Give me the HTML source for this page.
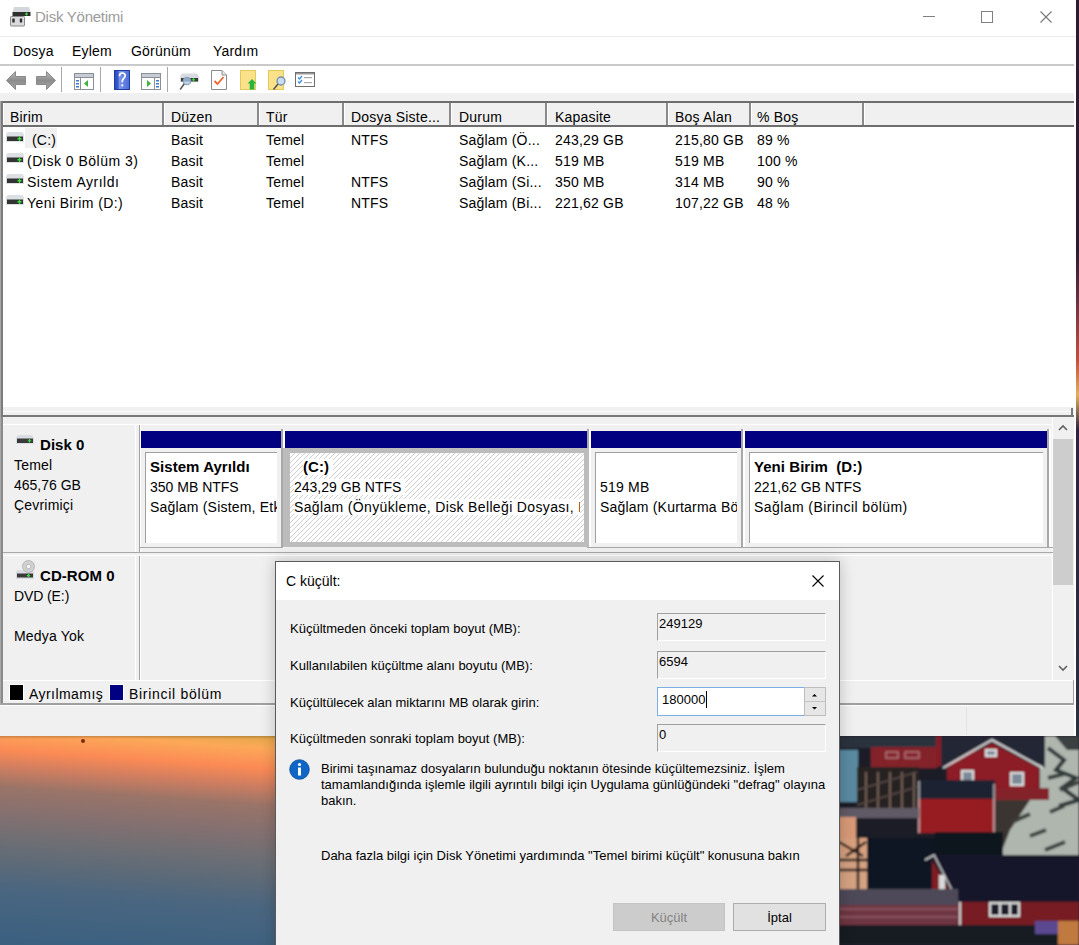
<!DOCTYPE html>
<html><head><meta charset="utf-8">
<style>
*{margin:0;padding:0;box-sizing:border-box}
html,body{width:1079px;height:945px;overflow:hidden;background:#2b1b2e;font-family:"Liberation Sans",sans-serif;}
.a{position:absolute}
.t{position:absolute;white-space:nowrap;font-size:14px;color:#000;line-height:16px;letter-spacing:0.2px}
.b{font-weight:bold;font-size:15px;letter-spacing:0.05px}
#win{position:absolute;left:0;top:0;width:1076px;height:736px;background:#f0f0f0;overflow:hidden}
.hd{position:absolute;top:103px;height:23px;background:#f0f0f0;border-left:1px solid #fff;border-right:2px solid #8a8a8a}
.row .t{}
.ico{position:absolute}
.d{position:absolute;white-space:nowrap;font-size:13px;line-height:15px;color:#000}
.tb{position:absolute;background:#f0f0f0;border-top:1px solid #a0a0a0;border-left:1px solid #a0a0a0;border-right:1px solid #fff;border-bottom:1px solid #fff}
</style></head><body>
<!-- wallpaper left gradient -->
<div class="a" style="left:0;top:736px;width:276px;height:209px;background:linear-gradient(184deg,#e0a848 0px,#fca858 13px,#fb8a55 33px,#d07e60 50px,#9a7468 70px,#857070 96px,#6f6f74 121px,#5c6a78 147px,#4a6680 172px,#3a6080 228px)"></div>
<div class="a" style="left:0;top:736px;width:276px;height:3px;background:linear-gradient(180deg,rgba(60,30,10,0.25),rgba(60,30,10,0))"></div>
<div class="a" style="left:81px;top:739px;width:4px;height:4px;border-radius:50%;background:#7a2a10"></div>
<!-- wallpaper right photo -->
<svg class="a" style="left:839px;top:736px" width="240" height="209" viewBox="839 736 240 209"><defs><filter id="bl" x="0" y="0" width="1" height="1"><feGaussianBlur stdDeviation="0.9"/></filter></defs><g filter="url(#bl)">
  <rect x="839" y="736" width="240" height="209" fill="#1a1c26"/>
  <!-- snow right -->
  <path d="M1040 736H1079V856H994V800H1040Z" fill="#aeb6ae"/>
  <path d="M1055 736h24v14h-12z" fill="#3a4040"/>
  <path d="M1048 748l16 12-8 10 20 8-14 10 17 12-20 6" stroke="#2f3738" stroke-width="4" fill="none"/>
  <path d="M995 800H1030L1010 830L1000 856H995Z" fill="#3a3632"/><path d="M1012 822l18-8M1030 836l16-6M1045 850l20-8M1050 812l14-6M1060 790l19-8M1048 778l16-4" stroke="#3a403e" stroke-width="4" fill="none"/>
  <!-- left teal -->
  <rect x="839" y="750" width="19" height="52" fill="#5a8aa2"/>
  <!-- upper dark roof left -->
  <rect x="839" y="736" width="100" height="12" fill="#2a303e"/>
  <!-- upper red house left -->
  <rect x="871" y="747" width="66" height="21" fill="#84202a"/>
  <rect x="886" y="752" width="12" height="6" fill="none" stroke="#c0a0a0" stroke-width="1"/>
  <rect x="905" y="752" width="14" height="6" fill="none" stroke="#c0a0a0" stroke-width="1"/>
  <rect x="936" y="736" width="40" height="30" fill="#861c26"/>
  <!-- gable house -->
  <path d="M941 768L992 739L1045 768V736H941Z" fill="#202536"/>
  <path d="M943 768L992 740L1043 768" stroke="#dcdcdc" stroke-width="2" fill="none"/>
  <path d="M947 768L992 743L1039 768V790H947Z" fill="#8c1c26"/>
    <rect x="985" y="749" width="12" height="8" fill="#e0e0e0"/><rect x="987" y="751" width="8" height="4" fill="#7d8a99"/>
  <rect x="961" y="770" width="13" height="13" fill="#e0e0e0"/><rect x="963" y="772" width="9" height="9" fill="#7d8a99"/>
  <rect x="1010" y="772" width="14" height="14" fill="#e0e0e0"/><rect x="1012" y="774" width="10" height="10" fill="#7d8a99"/>
  <rect x="994" y="788" width="55" height="12" fill="#84202a"/>
  <!-- wooden structure -->
  <rect x="857" y="767" width="62" height="45" fill="#262022"/>
  <path d="M866 772v36M878 772v36M890 772v36M902 772v36M914 772v36" stroke="#b89a88" stroke-width="1"/>
  <path d="M857 790l60-18M857 805l60-18" stroke="#5a4a48" stroke-width="1.5"/>
  <!-- red box building -->
  <rect x="918" y="780" width="77" height="20" fill="#1b2030"/>
  <rect x="918" y="799" width="77" height="34" fill="#961a24"/>
  <path d="M919 781v52M994 784v48" stroke="#d0d0d0" stroke-width="1.3"/>
  <!-- lower-left planks -->
  <rect x="839" y="808" width="80" height="10" fill="#605a66"/>
  <rect x="839" y="817" width="17" height="22" fill="#d89a78"/>
  <rect x="839" y="838" width="55" height="14" fill="#d8a07e"/>
  <rect x="839" y="852" width="30" height="42" fill="#d5a282"/>
  <path d="M839 842l24 14M846 856l20-14M839 860h55M839 870h55M858 838v56" stroke="#1a1818" stroke-width="2.5"/>
  <!-- dark trees -->
  <rect x="867" y="838" width="68" height="52" fill="#111822"/>
  <rect x="935" y="832" width="68" height="24" fill="#0e131b"/>
  <!-- big roof -->
  <path d="M934 855H1079V902H958Z" fill="#14172a"/>
  <path d="M925 860L934 855L958 902" stroke="#d0d0d0" stroke-width="1.5" fill="none"/>
  <path d="M932 860L956 902H932Z" fill="#801a24"/>
  <rect x="939" y="875" width="6" height="18" fill="#d8d8d8"/>
  <!-- red wall bottom -->
  <rect x="957" y="902" width="122" height="25" fill="#761a22"/>
  <rect x="959" y="902" width="2" height="24" fill="#d0d0d0"/>
  <rect x="989" y="902" width="31" height="15" fill="#dedede"/>
  <rect x="991" y="904" width="8" height="11" fill="#1a1a2a"/><rect x="1001" y="904" width="8" height="11" fill="#1a1a2a"/><rect x="1011" y="904" width="7" height="11" fill="#1a1a2a"/>
  <!-- deck and railing -->
  <rect x="839" y="889" width="119" height="16" fill="#4e4a58"/>
  <rect x="839" y="905" width="119" height="20" fill="#6e3442"/>
  <path d="M839 909h119M839 917h119" stroke="#a07080" stroke-width="1"/>
  <rect x="839" y="925" width="240" height="20" fill="#191a22"/>
  <rect x="1035" y="921" width="26" height="13" fill="#5a4890"/>
  <rect x="1058" y="921" width="21" height="24" fill="#c07a40"/>
</g></svg>
<div class="a" style="left:1076px;top:0;width:3px;height:736px;background:linear-gradient(180deg,#2e1a30 0,#2e1a30 250px,#6a3040 300px,#c05040 360px,#e0b060 395px,#302040 430px,#283040 736px)"></div>
<div id="win">
  <!-- title bar -->
  <div class="a" style="left:0;top:0;width:1076px;height:36px;background:#fff"></div>
  <svg class="ico" style="left:9px;top:6px" width="24" height="22" viewBox="0 0 24 22">
    <path d="M5 1H20L21.5 6H3.5Z" fill="#d3d6da"/>
    <rect x="3.5" y="6" width="18" height="4" fill="#2e2e2e"/>
    <path d="M17.5 6.5V9.5M16 8H19" stroke="#3ce03c" stroke-width="1.2"/>
    <rect x="1.5" y="10.5" width="14" height="9.5" rx="0.8" fill="#dadadc" stroke="#8a8a8a" stroke-width="1"/>
    <rect x="3.3" y="12.5" width="2.4" height="4" rx="0.6" fill="#2e2e2e"/>
    <rect x="10.8" y="12.5" width="2.4" height="4" rx="0.6" fill="#2e2e2e"/>
  </svg>
  <div class="t" style="left:35px;top:8px;color:#9a9a9a;font-size:15px;line-height:17px;letter-spacing:-0.25px">Disk Yönetimi</div>
  <div class="a" style="left:923px;top:16px;width:12px;height:1px;background:#808080"></div>
  <div class="a" style="left:981px;top:11px;width:12px;height:12px;border:1px solid #808080"></div>
  <svg class="ico" style="left:1040px;top:11px" width="12" height="12" viewBox="0 0 12 12"><path d="M0.5 0.5L11.5 11.5M11.5 0.5L0.5 11.5" stroke="#777" stroke-width="1.1"/></svg>
  <div class="a" style="left:0;top:36px;width:1076px;height:1px;background:#ececec"></div>
  <!-- menu -->
  <div class="a" style="left:0;top:37px;width:1076px;height:27px;background:#fff"></div>
  <div class="t" style="left:13px;top:43px">Dosya</div>
  <div class="t" style="left:72px;top:43px">Eylem</div>
  <div class="t" style="left:131px;top:43px">Görünüm</div>
  <div class="t" style="left:213px;top:43px">Yardım</div>
  <div class="a" style="left:0;top:64px;width:1076px;height:2px;background:#cacaca"></div>
  <!-- toolbar -->
  <div class="a" style="left:0;top:66px;width:1076px;height:27px;background:#fff"></div>
  
  <!-- back arrow -->
  <svg class="ico" style="left:5px;top:70px" width="23" height="21" viewBox="0 0 23 21">
    <defs><linearGradient id="ga" x1="0" y1="0" x2="0" y2="1"><stop offset="0" stop-color="#bdbdbd"/><stop offset="0.5" stop-color="#8c8c8c"/><stop offset="1" stop-color="#a8a8a8"/></linearGradient></defs>
    <path d="M1.5 10.5L10.5 1.5V6.5H20.5V14.5H10.5V19.5Z" fill="url(#ga)" stroke="#8a8a8a" stroke-width="1" stroke-linejoin="round"/>
  </svg>
  <svg class="ico" style="left:34px;top:70px" width="23" height="21" viewBox="0 0 23 21">
    <path d="M21.5 10.5L12.5 1.5V6.5H2.5V14.5H12.5V19.5Z" fill="url(#ga)" stroke="#8a8a8a" stroke-width="1" stroke-linejoin="round"/>
  </svg>
  <div class="a" style="left:61px;top:67px;width:1px;height:25px;background:#a8a8a8"></div>
  <!-- icon 3: window with left arrow -->
  <svg class="ico" style="left:74px;top:73px" width="20" height="17" viewBox="0 0 20 17">
    <rect x="0.5" y="0.5" width="19" height="16" fill="#fff" stroke="#8a9099"/>
    <rect x="1" y="1" width="18" height="3" fill="#c7ccd4"/>
    <rect x="1" y="4" width="18" height="1" fill="#8a9099"/>
    <rect x="6" y="5" width="1" height="11" fill="#8a9099"/>
    <rect x="2" y="7" width="3" height="1.5" fill="#3c78c8"/><rect x="2" y="10" width="3" height="1.5" fill="#3c78c8"/><rect x="2" y="13" width="3" height="1.5" fill="#3c78c8"/>
    <path d="M10 10.5L14 7V14Z" fill="#3cb43c"/>
  </svg>
  <div class="a" style="left:100px;top:67px;width:1px;height:25px;background:#a8a8a8"></div>
  <!-- help -->
  <svg class="ico" style="left:114px;top:70px" width="16" height="20" viewBox="0 0 16 20">
    <defs><linearGradient id="gh" x1="0" y1="0" x2="1" y2="0"><stop offset="0" stop-color="#2a4cc0"/><stop offset="0.25" stop-color="#3b5bd0"/><stop offset="0.3" stop-color="#7d98e8"/><stop offset="1" stop-color="#4a6ad8"/></linearGradient></defs>
    <rect x="0.5" y="0.5" width="15" height="19" fill="url(#gh)" stroke="#1e3aa0" stroke-width="1"/>
    <path d="M5.5 6.2C5.5 4 6.8 3 8.3 3C10 3 11.2 4.1 11.2 5.8C11.2 7.6 9.3 8.4 8.6 9.8C8.3 10.5 8.3 11.2 8.3 12.3" stroke="#fff" stroke-width="1.7" fill="none"/>
    <circle cx="8.3" cy="15.3" r="1.1" fill="#fff"/>
  </svg>
  <!-- icon 5: window with right arrow -->
  <svg class="ico" style="left:141px;top:73px" width="20" height="17" viewBox="0 0 20 17">
    <rect x="0.5" y="0.5" width="19" height="16" fill="#fff" stroke="#8a9099"/>
    <rect x="1" y="1" width="18" height="3" fill="#c7ccd4"/>
    <rect x="1" y="4" width="18" height="1" fill="#8a9099"/>
    <rect x="13" y="5" width="1" height="11" fill="#8a9099"/>
    <rect x="15" y="7" width="3" height="1.5" fill="#3c78c8"/><rect x="15" y="10" width="3" height="1.5" fill="#3c78c8"/><rect x="15" y="13" width="3" height="1.5" fill="#3c78c8"/>
    <path d="M10 10.5L6 7V14Z" fill="#3cb43c"/>
  </svg>
  <div class="a" style="left:167px;top:67px;width:1px;height:25px;background:#a8a8a8"></div>
  <!-- icon 6: disk with magnifier -->
  <svg class="ico" style="left:179px;top:73px" width="21" height="18" viewBox="0 0 21 18">
    <path d="M3 0.5H18L20 3.5V9H1V3.5Z" fill="#d8dbe0"/>
    <rect x="2" y="5" width="17" height="3.5" fill="#3a3a3a"/>
    <path d="M14.5 5V8.5M12.8 6.75H16.2" stroke="#3ce03c" stroke-width="1.2"/>
    <circle cx="8" cy="8" r="3.8" fill="#a9c8e8" fill-opacity="0.8" stroke="#8aa0b5" stroke-width="1.1"/>
    <path d="M5.2 10.8L1.2 16.5" stroke="#555" stroke-width="1.5"/>
  </svg>
  <!-- icon 7: doc with check -->
  <svg class="ico" style="left:211px;top:70px" width="16" height="20" viewBox="0 0 16 20">
    <path d="M0.5 0.5H11L15.5 5V19.5H0.5Z" fill="#fff" stroke="#8c8c8c"/>
    <path d="M11 0.5V5H15.5" fill="#e8e8e8" stroke="#8c8c8c"/>
    <path d="M3.5 11L6.5 14L12.5 7" stroke="#f0642d" stroke-width="1.8" fill="none"/>
  </svg>
  <!-- icon 8: folder up -->
  <svg class="ico" style="left:240px;top:70px" width="17" height="20" viewBox="0 0 17 20">
    <rect x="0.5" y="0.5" width="15" height="19" fill="#fbe28a" stroke="#e5c85a"/>
    <path d="M12 9L16.5 13.5H14.3V19.5H9.7V13.5H7.5Z" fill="#27b53c"/>
  </svg>
  <!-- icon 9: folder magnifier -->
  <svg class="ico" style="left:268px;top:70px" width="19" height="20" viewBox="0 0 19 20">
    <rect x="0.5" y="0.5" width="15" height="19" fill="#fbe28a" stroke="#e5c85a"/>
    <circle cx="13" cy="11" r="4" fill="#c8dcef" stroke="#7a8fa5" stroke-width="1.3"/>
    <path d="M10 14L5.5 19.5" stroke="#555" stroke-width="1.6"/>
  </svg>
  <!-- icon 10: checklist -->
  <svg class="ico" style="left:295px;top:72px" width="20" height="15" viewBox="0 0 20 15">
    <rect x="0.5" y="0.5" width="19" height="14" fill="#fff" stroke="#6e6e6e"/>
    <rect x="1" y="1" width="18" height="1.5" fill="#999"/>
    <path d="M3 5.5L4.5 7L7 4M3 9.5L4.5 11L7 8" stroke="#3c8ce0" stroke-width="1.3" fill="none"/>
    <rect x="9" y="5" width="8" height="1.2" fill="#aaa"/><rect x="9" y="10" width="8" height="1.2" fill="#aaa"/>
  </svg>

  <!-- list pane -->
  <div class="a" style="left:1px;top:101px;width:1074px;height:2px;background:#6e6e6e"></div>
  <div class="a" style="left:0;top:101px;width:1px;height:604px;background:#a8a8a8"></div><div class="a" style="left:1px;top:101px;width:2px;height:316px;background:#7c7c7c"></div>
  <div class="a" style="left:3px;top:103px;width:1071px;height:304px;background:#fff"></div>
  <!-- header -->
  <div class="hd" style="left:3px;width:161px"></div>
  <div class="hd" style="left:164px;width:95px"></div>
  <div class="hd" style="left:259px;width:85px"></div>
  <div class="hd" style="left:344px;width:107px"></div>
  <div class="hd" style="left:451px;width:96px"></div>
  <div class="hd" style="left:547px;width:121px"></div>
  <div class="hd" style="left:668px;width:83px"></div>
  <div class="hd" style="left:751px;width:113px"></div>
  <div class="hd" style="left:864px;width:210px;border-right:0"></div>
  <div class="a" style="left:3px;top:125px;width:1071px;height:2px;background:#6e6e6e"></div>
  <div class="t" style="left:10px;top:109px">Birim</div>
  <div class="t" style="left:171px;top:109px">Düzen</div>
  <div class="t" style="left:266px;top:109px">Tür</div>
  <div class="t" style="left:351px;top:109px">Dosya Siste...</div>
  <div class="t" style="left:459px;top:109px">Durum</div>
  <div class="t" style="left:555px;top:109px">Kapasite</div>
  <div class="t" style="left:675px;top:109px">Boş Alan</div>
  <div class="t" style="left:757px;top:109px">% Boş</div>
  <div class="a" style="left:25px;top:128px;width:32px;height:20px;background:#f0f0f0"></div>
<svg class="ico" style="left:6px;top:132px" width="18" height="10" viewBox="0 0 18 10">
    <path d="M1.5 0H16.5L18 2.5V10H0V2.5Z" fill="#dcdfe3"/>
    <rect x="1" y="4.5" width="16" height="4.5" fill="#333"/>
    <path d="M13.5 4.5V9M11.5 6.75H15.5" stroke="#3ce03c" stroke-width="1.3"/></svg>
<div class="t" style="left:32px;top:132px">(C:)</div>
<div class="t" style="left:171px;top:132px">Basit</div>
<div class="t" style="left:266px;top:132px">Temel</div>
<div class="t" style="left:351px;top:132px">NTFS</div>
<div class="t" style="left:459px;top:132px">Sağlam (Ö...</div>
<div class="t" style="left:555px;top:132px">243,29 GB</div>
<div class="t" style="left:675px;top:132px">215,80 GB</div>
<div class="t" style="left:757px;top:132px">89 %</div>
<svg class="ico" style="left:6px;top:153px" width="18" height="10" viewBox="0 0 18 10">
    <path d="M1.5 0H16.5L18 2.5V10H0V2.5Z" fill="#dcdfe3"/>
    <rect x="1" y="4.5" width="16" height="4.5" fill="#333"/>
    <path d="M13.5 4.5V9M11.5 6.75H15.5" stroke="#3ce03c" stroke-width="1.3"/></svg>
<div class="t" style="left:27px;top:153px;letter-spacing:0.5px">(Disk 0 Bölüm 3)</div>
<div class="t" style="left:171px;top:153px">Basit</div>
<div class="t" style="left:266px;top:153px">Temel</div>
<div class="t" style="left:459px;top:153px">Sağlam (K...</div>
<div class="t" style="left:555px;top:153px">519 MB</div>
<div class="t" style="left:675px;top:153px">519 MB</div>
<div class="t" style="left:757px;top:153px">100 %</div>
<svg class="ico" style="left:6px;top:174px" width="18" height="10" viewBox="0 0 18 10">
    <path d="M1.5 0H16.5L18 2.5V10H0V2.5Z" fill="#dcdfe3"/>
    <rect x="1" y="4.5" width="16" height="4.5" fill="#333"/>
    <path d="M13.5 4.5V9M11.5 6.75H15.5" stroke="#3ce03c" stroke-width="1.3"/></svg>
<div class="t" style="left:27px;top:174px;letter-spacing:0.5px">Sistem Ayrıldı</div>
<div class="t" style="left:171px;top:174px">Basit</div>
<div class="t" style="left:266px;top:174px">Temel</div>
<div class="t" style="left:351px;top:174px">NTFS</div>
<div class="t" style="left:459px;top:174px">Sağlam (Si...</div>
<div class="t" style="left:555px;top:174px">350 MB</div>
<div class="t" style="left:675px;top:174px">314 MB</div>
<div class="t" style="left:757px;top:174px">90 %</div>
<svg class="ico" style="left:6px;top:195px" width="18" height="10" viewBox="0 0 18 10">
    <path d="M1.5 0H16.5L18 2.5V10H0V2.5Z" fill="#dcdfe3"/>
    <rect x="1" y="4.5" width="16" height="4.5" fill="#333"/>
    <path d="M13.5 4.5V9M11.5 6.75H15.5" stroke="#3ce03c" stroke-width="1.3"/></svg>
<div class="t" style="left:27px;top:195px;letter-spacing:0.43px">Yeni Birim (D:)</div>
<div class="t" style="left:171px;top:195px">Basit</div>
<div class="t" style="left:266px;top:195px">Temel</div>
<div class="t" style="left:351px;top:195px">NTFS</div>
<div class="t" style="left:459px;top:195px">Sağlam (Bi...</div>
<div class="t" style="left:555px;top:195px">221,62 GB</div>
<div class="t" style="left:675px;top:195px">107,22 GB</div>
<div class="t" style="left:757px;top:195px">48 %</div>


  <!-- splitter area -->
  <div class="a" style="left:3px;top:407px;width:1071px;height:9px;background:#f0f0f0"></div>
  <div class="a" style="left:3px;top:411px;width:1071px;height:1px;background:#fafafa"></div>
  <div class="a" style="left:1px;top:415px;width:1073px;height:2px;background:#787878"></div>
  <!-- graphic pane -->
  <div class="a" style="left:1px;top:417px;width:2px;height:287px;background:#8a8a8a"></div>
  <div class="a" style="left:3px;top:424px;width:1050px;height:1px;background:#fff"></div><div class="a" style="left:1052px;top:417px;width:1px;height:263px;background:#fff"></div><div class="a" style="left:1071px;top:408px;width:2px;height:8px;background:#7a7a7a"></div>
  <!-- disk0 info cell -->
  <div class="a" style="left:135px;top:425px;width:1px;height:128px;background:#fff"></div>
  <div class="a" style="left:139px;top:425px;width:1px;height:128px;background:#a0a0a0"></div>
  <div class="a" style="left:140px;top:425px;width:1px;height:128px;background:#fff"></div>
  <svg class="ico" style="left:16px;top:435px" width="18" height="10" viewBox="0 0 18 10">
    <path d="M2 0H16L18 3V9H0V3Z" fill="#d9dce1"/>
    <rect x="1" y="3.5" width="16" height="4.5" fill="#3a3a3a"/>
    <path d="M13.5 4V7.5M11.8 5.75H15.2" stroke="#3ce03c" stroke-width="1.2"/></svg>
  <div class="t b" style="left:40px;top:437px">Disk 0</div>
  <div class="t" style="left:14px;top:457px">Temel</div>
  <div class="t" style="left:14px;top:477px;letter-spacing:0px">465,76 GB</div>
  <div class="t" style="left:14px;top:497px">Çevrimiçi</div>
  <!-- partitions -->
  <div class="a" style="left:141px;top:431px;width:140px;height:17px;background:#000080"></div>
<div class="a" style="left:281px;top:429px;width:2px;height:119px;background:#a8a8a8"></div>
<div class="a" style="left:283px;top:429px;width:2px;height:119px;background:#fff"></div>
<div class="a" style="left:145px;top:452px;width:132px;height:91px;background:#fff;border-left:1px solid #a0a0a0;border-top:1px solid #a0a0a0"></div>
<div class="a" style="left:150px;top:456px;width:127px;height:60px;overflow:hidden"><div class="t b" style="left:0;top:3px">Sistem Ayrıldı</div><div class="t" style="left:0;top:23px;letter-spacing:0px">350 MB NTFS</div><div class="t" style="left:0;top:43px">Sağlam (Sistem, Etkin, Birincil bölüm)</div></div>
<div class="a" style="left:285px;top:431px;width:302px;height:17px;background:#000080"></div>
<div class="a" style="left:587px;top:429px;width:2px;height:119px;background:#a8a8a8"></div>
<div class="a" style="left:589px;top:429px;width:2px;height:119px;background:#fff"></div>
<div class="a" style="left:283px;top:448px;width:306px;height:99px;background:#bcbcbc"></div>
<svg class="a" style="left:290px;top:453px" width="294" height="89"><defs><pattern id="hp" width="5" height="5" patternUnits="userSpaceOnUse"><rect width="5" height="5" fill="#fff"/><path d="M-1 6L6 -1" stroke="#cfcfcf" stroke-width="1"/></pattern></defs><rect width="294" height="89" fill="url(#hp)"/></svg>
<div class="a" style="left:291px;top:456px;width:289px;height:60px;overflow:hidden"><div class="t b" style="left:12px;top:3px;background:#fff;padding:0 4px 0 0">(C:)</div><div class="t" style="left:3px;top:23px;background:#fff;padding-right:4px;letter-spacing:0px">243,29 GB NTFS</div><div class="t" style="left:3px;top:43px;background:#fff;letter-spacing:0.35px">Sağlam (Önyükleme, Disk Belleği Dosyası, Kilitlenme Dökümü, Birincil bölüm)</div></div>
<div class="a" style="left:591px;top:431px;width:150px;height:17px;background:#000080"></div>
<div class="a" style="left:741px;top:429px;width:2px;height:119px;background:#a8a8a8"></div>
<div class="a" style="left:743px;top:429px;width:2px;height:119px;background:#fff"></div>
<div class="a" style="left:595px;top:452px;width:142px;height:91px;background:#fff;border-left:1px solid #a0a0a0;border-top:1px solid #a0a0a0"></div>
<div class="a" style="left:600px;top:456px;width:137px;height:60px;overflow:hidden"><div class="t" style="left:0;top:23px">519 MB</div><div class="t" style="left:0;top:43px">Sağlam (Kurtarma Bölümü)</div></div>
<div class="a" style="left:745px;top:431px;width:302px;height:17px;background:#000080"></div>
<div class="a" style="left:1047px;top:429px;width:2px;height:119px;background:#a8a8a8"></div>
<div class="a" style="left:1049px;top:429px;width:2px;height:119px;background:#fff"></div>
<div class="a" style="left:749px;top:452px;width:294px;height:91px;background:#fff;border-left:1px solid #a0a0a0;border-top:1px solid #a0a0a0"></div>
<div class="a" style="left:754px;top:456px;width:289px;height:60px;overflow:hidden"><div class="t b" style="left:0;top:3px">Yeni Birim&nbsp; (D:)</div><div class="t" style="left:0;top:23px;letter-spacing:0px">221,62 GB NTFS</div><div class="t" style="left:0;top:43px;letter-spacing:0.42px">Sağlam (Birincil bölüm)</div></div>

  <div class="a" style="left:140px;top:547px;width:143px;height:1px;background:#a8a8a8"></div><div class="a" style="left:589px;top:547px;width:464px;height:1px;background:#a8a8a8"></div>
  <div class="a" style="left:3px;top:552px;width:1050px;height:1px;background:#a8a8a8"></div>
  <div class="a" style="left:3px;top:555px;width:1050px;height:1px;background:#fff"></div>
  <!-- cdrom -->
  <div class="a" style="left:135px;top:556px;width:1px;height:124px;background:#fff"></div>
  <div class="a" style="left:139px;top:556px;width:1px;height:124px;background:#a0a0a0"></div>
  <div class="a" style="left:140px;top:556px;width:1px;height:124px;background:#fff"></div>
  <svg class="ico" style="left:16px;top:560px" width="20" height="20" viewBox="0 0 20 20">
    <path d="M1 10H17L18 12V19H0V12Z" fill="#d9dce1"/>
    <circle cx="12.5" cy="6.5" r="6" fill="#d0d0d0" stroke="#b8b8b8"/>
    <circle cx="12.5" cy="6.5" r="2.2" fill="#fff" stroke="#aaa" stroke-width="0.8"/>
    <rect x="1" y="13.5" width="16" height="4" fill="#3a3a3a"/>
    <path d="M12.5 14V17.3M10.9 15.65H14.1" stroke="#3ce03c" stroke-width="1.2"/></svg>
  <div class="t b" style="left:40px;top:568px">CD-ROM 0</div>
  <div class="t" style="left:14px;top:588px;letter-spacing:-0.1px">DVD (E:)</div>
  <div class="t" style="left:14px;top:628px">Medya Yok</div>
  <!-- scrollbar -->
  <div class="a" style="left:1053px;top:417px;width:21px;height:263px;background:#f0f0f0"></div>
  <div class="a" style="left:1053px;top:439px;width:20px;height:146px;background:#cdcdcd"></div>
  <svg class="ico" style="left:1057px;top:424px" width="12" height="8" viewBox="0 0 12 8"><path d="M2 6L6 2L10 6" stroke="#606060" stroke-width="1.6" fill="none"/></svg>
  <svg class="ico" style="left:1057px;top:664px" width="12" height="8" viewBox="0 0 12 8"><path d="M2 2L6 6L10 2" stroke="#606060" stroke-width="1.6" fill="none"/></svg>
  <!-- legend -->
  <div class="a" style="left:3px;top:680px;width:1071px;height:1px;background:#fff"></div>
  <div class="a" style="left:10px;top:685px;width:13px;height:15px;background:#000;outline:1px solid #fff"></div>
  <div class="t" style="left:29px;top:686px;letter-spacing:0.45px">Ayrılmamış</div>
  <div class="a" style="left:110px;top:685px;width:13px;height:15px;background:#000080;outline:1px solid #fff"></div>
  <div class="t" style="left:129px;top:686px;letter-spacing:0.7px">Birincil bölüm</div>
  <div class="a" style="left:1px;top:703px;width:1073px;height:2px;background:#a0a0a0"></div>
  <div class="a" style="left:1073px;top:680px;width:1px;height:24px;background:#a0a0a0"></div>
  <div class="a" style="left:0;top:705px;width:1076px;height:1px;background:#fff"></div><div class="a" style="left:966px;top:708px;width:1px;height:27px;background:#e2e2e2"></div>
  <div class="a" style="left:1074px;top:37px;width:2px;height:699px;background:#fff"></div>
</div>

<!-- dialog -->
<div class="a" style="left:275px;top:561px;width:565px;height:400px;background:#f0f0f0;border:1px solid #5a5a5a;box-shadow:0 0 14px rgba(0,0,0,0.22)">
</div>
<div class="a" style="left:276px;top:562px;width:563px;height:38px;background:#fff"></div>
<div class="t" style="left:286px;top:573px;font-size:14px;letter-spacing:0px">C küçült:</div>
<svg class="ico" style="left:812px;top:575px" width="12" height="12" viewBox="0 0 12 12"><path d="M0.5 0.5L11.5 11.5M11.5 0.5L0.5 11.5" stroke="#000" stroke-width="1.1"/></svg>
<div class="d" style="left:290px;top:621px">Küçültmeden önceki toplam boyut (MB):</div>
<div class="d" style="left:290px;top:658px">Kullanılabilen küçültme alanı boyutu (MB):</div>
<div class="d" style="left:290px;top:695px">Küçültülecek alan miktarını MB olarak girin:</div>
<div class="d" style="left:290px;top:731px">Küçültmeden sonraki toplam boyut (MB):</div>
<div class="tb" style="left:657px;top:613px;width:169px;height:28px"><span class="d" style="left:1px;top:2px">249129</span></div>
<div class="tb" style="left:657px;top:651px;width:169px;height:28px"><span class="d" style="left:1px;top:2px">6594</span></div>
<div class="a" style="left:657px;top:687px;width:148px;height:29px;border:1px solid #7aaee6;background:#fff"></div>
<div class="d" style="left:662px;top:692px">180000</div>
<div class="a" style="left:706px;top:691px;width:1px;height:17px;background:#000"></div>
<div class="a" style="left:804px;top:687px;width:22px;height:29px;background:#e6e6e6;border:1px solid #bdbdbd"></div>
<div class="a" style="left:805px;top:701px;width:20px;height:1px;background:#c4c4c4"></div>
<svg class="ico" style="left:811px;top:692px" width="7" height="20" viewBox="0 0 7 20"><path d="M1 4.5L3.5 2L6 4.5Z M1 15L3.5 17.5L6 15Z" fill="#000"/></svg>
<div class="tb" style="left:657px;top:724px;width:169px;height:28px"><span class="d" style="left:1px;top:2px">0</span></div>
<svg class="ico" style="left:289px;top:759px" width="21" height="21" viewBox="0 0 21 21">
  <circle cx="10.5" cy="10.5" r="9.8" fill="#0f66c6" stroke="#0a4f9c" stroke-width="0.8"/>
  <circle cx="10.5" cy="5.5" r="1.6" fill="#fff"/>
  <rect x="9" y="8.5" width="3" height="8" fill="#fff"/>
</svg>
<div class="d" style="left:321px;top:761px">Birimi taşınamaz dosyaların bulunduğu noktanın ötesinde küçültemezsiniz. İşlem</div>
<div class="d" style="left:321px;top:777px">tamamlandığında işlemle ilgili ayrıntılı bilgi için Uygulama günlüğündeki "defrag" olayına</div>
<div class="d" style="left:321px;top:793px">bakın.</div>
<div class="d" style="left:321px;top:848px">Daha fazla bilgi için Disk Yönetimi yardımında "Temel birimi küçült" konusuna bakın</div>
<div class="a" style="left:613px;top:903px;width:112px;height:28px;background:#cccccc;border:1px solid #c4c4c4"></div>
<div class="d" style="left:613px;top:910px;width:112px;text-align:center;color:#838383">Küçült</div>
<div class="a" style="left:733px;top:903px;width:93px;height:28px;background:#e1e1e1;border:1px solid #adadad"></div>
<div class="d" style="left:733px;top:910px;width:93px;text-align:center">İptal</div>
</body></html>
